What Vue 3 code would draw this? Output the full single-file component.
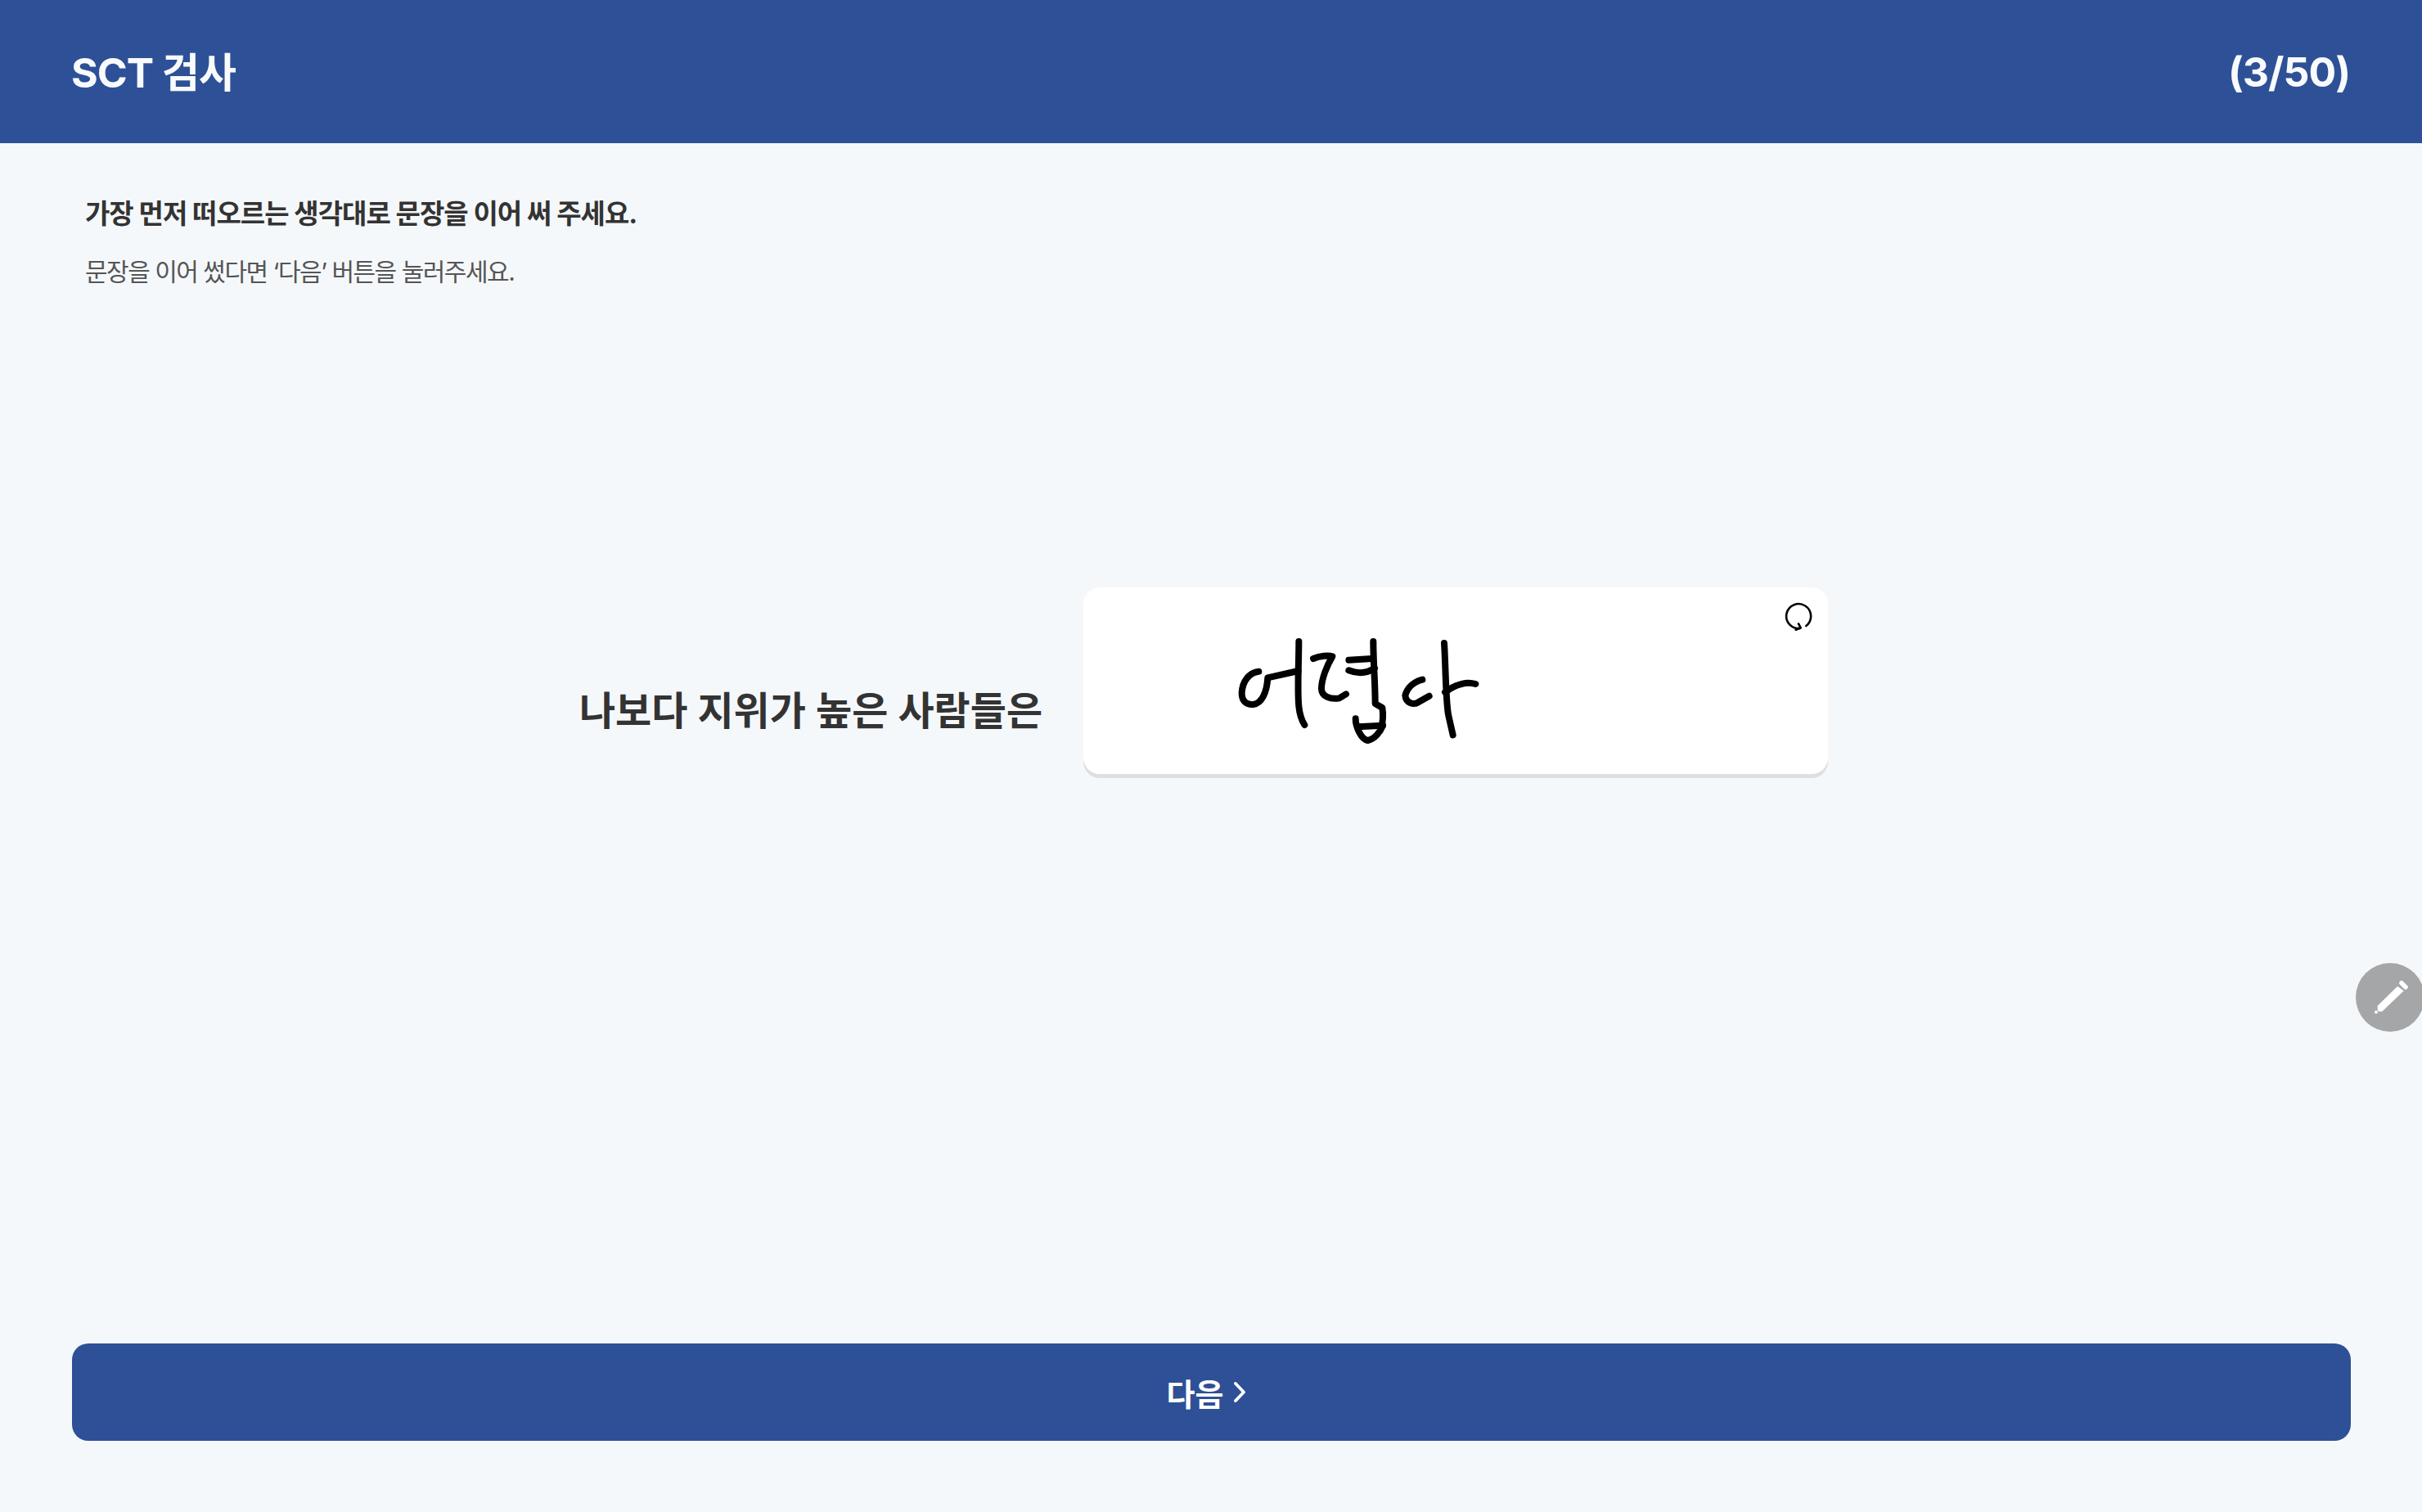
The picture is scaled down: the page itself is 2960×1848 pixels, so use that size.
<script setup>
const strokes = [
  'M175 182 C140 185 115 220 113 260 C112 290 130 305 155 303 C185 300 205 260 208 205 L320 180',
  'M322 72 C322 150 316 250 322 310 C325 340 335 365 343 378',
  'M375 135 C400 125 430 122 445 127 C425 160 405 210 405 245 C405 275 440 285 470 280 L495 265',
  'M505 140 L590 135',
  'M505 178 C535 190 570 190 600 170',
  'M595 72 C595 150 602 220 602 300 L628 315 C632 340 630 365 625 385',
  'M530 355 C530 385 550 430 575 435 C600 430 620 405 630 380',
  'M540 385 L630 380',
  'M775 212 C745 220 720 240 712 270 C715 300 745 305 760 295 L800 272',
  'M855 78 C860 150 860 280 870 340 L887 415',
  'M858 258 C890 235 930 215 970 228'
]
</script>

<template>
  <div class="page">
    <header class="top">
      <h1 class="title">SCT 검사</h1>
      <span class="count">(3/50)</span>
    </header>

    <section class="guide">
      <p class="guide-main">가장 먼저 떠오르는 생각대로 문장을 이어 써 주세요.</p>
      <p class="guide-sub">문장을 이어 썼다면 ‘다음’ 버튼을 눌러주세요.</p>
    </section>

    <main class="stage">
      <span class="prompt">나보다 지위가 높은 사람들은</span>
      <div class="pad">
        <svg class="ink" viewBox="0 0 1020 480" fill="none" stroke="#000" stroke-width="24" stroke-linecap="round" stroke-linejoin="round">
          <path v-for="(d, i) in strokes" :key="i" :d="d" />
        </svg>
        <svg class="reset" viewBox="0 0 36 36" fill="none" stroke="#000" stroke-width="2.6" stroke-linecap="round" stroke-linejoin="round">
          <path d="M26.3 30 A15 15 0 1 0 19 33" />
          <path d="M17 27.3 L19.7 32.3 L13.7 34.7" />
        </svg>
      </div>
    </main>

    <footer class="bottom">
      <button class="next" type="button">
        <span>다음</span>
        <svg class="chevron" viewBox="0 0 26 26" fill="none" stroke="#fff" stroke-width="3.8" stroke-linecap="round" stroke-linejoin="round">
          <path d="M3 2 L13 12.5 L3 23" />
        </svg>
      </button>
    </footer>

    <button class="pencil" type="button" aria-label="필기">
      <svg viewBox="0 0 84 84" fill="#fff">
        <path d="M26.5 52.5 L51 28.5 L58.7 34 L32 59.5 L27 59 Z" />
        <circle cx="25" cy="60" r="2" />
        <path d="M56 24.5 L61 29.5" stroke="#fff" stroke-width="5.5" stroke-linecap="round" />
      </svg>
    </button>
  </div>
</template>

<style scoped>
.page {
  position: relative;
  display: flex;
  flex-direction: column;
  height: 1848px;
  overflow: hidden;
  background: #f5f8fb;
  font-family: Inter, "Noto Sans CJK KR", sans-serif;
  color: #333;
}
.top {
  display: flex;
  align-items: center;
  justify-content: space-between;
  height: 175px;
  padding: 0 88px 0 87px;
  box-sizing: border-box;
  background: #2e5096;
  color: #f8fafc;
  flex: none;
}
.title, .count {
  margin: 0;
  font-size: 50px;
  line-height: 60px;
  font-weight: 700;
  letter-spacing: -1px;
}
.title {
  margin-top: 2px;
}
.guide {
  padding: 62px 104px 0;
  flex: none;
}
.guide-main {
  margin: 0;
  font-size: 33px;
  line-height: 48px;
  font-weight: 700;
  letter-spacing: -1px;
  color: #333;
}
.guide-sub {
  margin: 24px 0 0;
  font-size: 30px;
  line-height: 46px;
  letter-spacing: -1.5px;
  color: #555;
}
.stage {
  flex: 1;
  display: flex;
  align-items: flex-start;
  justify-content: center;
  gap: 50px;
  padding: 363px 18px 0 0;
}
.prompt {
  margin-top: 116px;
  font-size: 48px;
  line-height: 70px;
  font-weight: 600;
  letter-spacing: 0;
  color: #333;
}
.pad {
  position: relative;
  width: 910px;
  height: 228px;
  background: #fff;
  border-radius: 20px;
  box-shadow: 0 5px 0 #dfdfdf;
}
.ink {
  position: absolute;
  left: 156px;
  top: 42px;
  width: 340px;
  height: 160px;
}
.reset {
  position: absolute;
  right: 17px;
  top: 17px;
  width: 36px;
  height: 36px;
}
.bottom {
  flex: none;
  padding: 0 87px 87px 88px;
}
.next {
  display: flex;
  align-items: center;
  justify-content: center;
  gap: 12px;
  width: 100%;
  height: 119px;
  padding: 0 2px 0 0;
  border: 0;
  border-radius: 20px;
  background: #2e5096;
  color: #fff;
  font: inherit;
  font-size: 38px;
  font-weight: 600;
}
.chevron {
  width: 26px;
  height: 26px;
}
.pencil {
  position: absolute;
  left: 2879px;
  top: 1177px;
  width: 84px;
  height: 84px;
  padding: 0;
  border: 0;
  border-radius: 50%;
  background: #a5a6a8;
}
.pencil svg {
  display: block;
  width: 84px;
  height: 84px;
}
</style>

<style>
html, body {
  margin: 0;
  background: #f5f8fb;
}
</style>
